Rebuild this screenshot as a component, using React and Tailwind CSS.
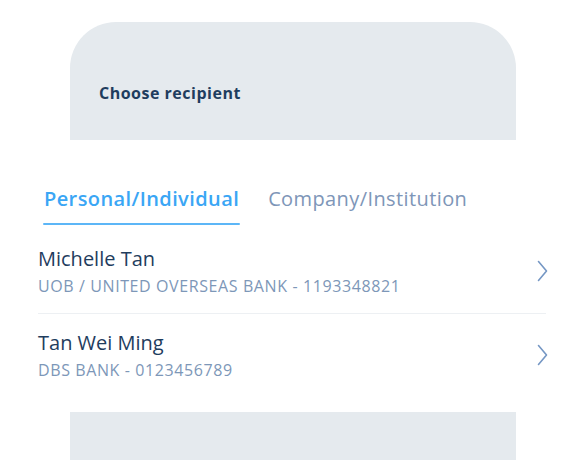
const RECIPIENTS = [
  { name: 'Michelle Tan', bank: 'UOB / UNITED OVERSEAS BANK - 1193348821' },
  { name: 'Tan Wei Ming', bank: 'DBS BANK - 0123456789' },
];

function Chevron() {
  return (
    <svg width="11" height="22" viewBox="0 0 11 22" fill="none" className="mr-[-2px]">
      <polyline points="1.5,1.5 9.5,11 1.5,20.5" stroke="#7597c4" strokeWidth="1.6" strokeLinecap="round" strokeLinejoin="round" />
    </svg>
  );
}

export default function App() {
  return (
    <div className="h-[460px] w-[586px] overflow-hidden bg-white font-['Open_Sans',sans-serif]">
      <div className="pt-[22px] px-[70px]">
        <div className="h-[118px] rounded-t-[46px] bg-[#e5eaee] pl-[29px] pt-[61px]">
          <h1 className="text-[16px] font-bold leading-5 tracking-[0.5px] text-[#1f3d5e]">Choose recipient</h1>
        </div>
      </div>

      <div className="mt-[45px] flex gap-[28px] pl-[43px]">
        <div className="flex flex-col">
          <span className="px-[1px] text-[20px] font-semibold leading-[28px] tracking-[0.4px] text-[#3aa6f5]">Personal/Individual</span>
          <span className="mt-[10px] h-[2px] rounded-full bg-[#5cb6f7]" />
        </div>
        <span className="text-[20px] leading-[28px] tracking-[0.4px] text-[#7e96b8]">Company/Institution</span>
      </div>

      <ul className="mt-[8px] pl-[38px] pr-[40px]">
        {RECIPIENTS.map((r, i) => (
          <li
            key={r.name}
            className={`flex items-center justify-between ${i === 0 ? 'border-b border-[#edf0f3] pt-[13px] pb-[17px]' : 'pt-[16px] pb-[20px]'}`}
          >
            <div>
              <div className="text-[20px] leading-[26px] text-[#1f3d5e]">{r.name}</div>
              <div className="mt-[4px] text-[16px] leading-5 tracking-[0.6px] text-[#7d97b8]">{r.bank}</div>
            </div>
            <Chevron />
          </li>
        ))}
      </ul>

      <div className="mt-[12px] px-[70px]">
        <div className="h-[60px] bg-[#e5eaee]" />
      </div>
    </div>
  );
}
